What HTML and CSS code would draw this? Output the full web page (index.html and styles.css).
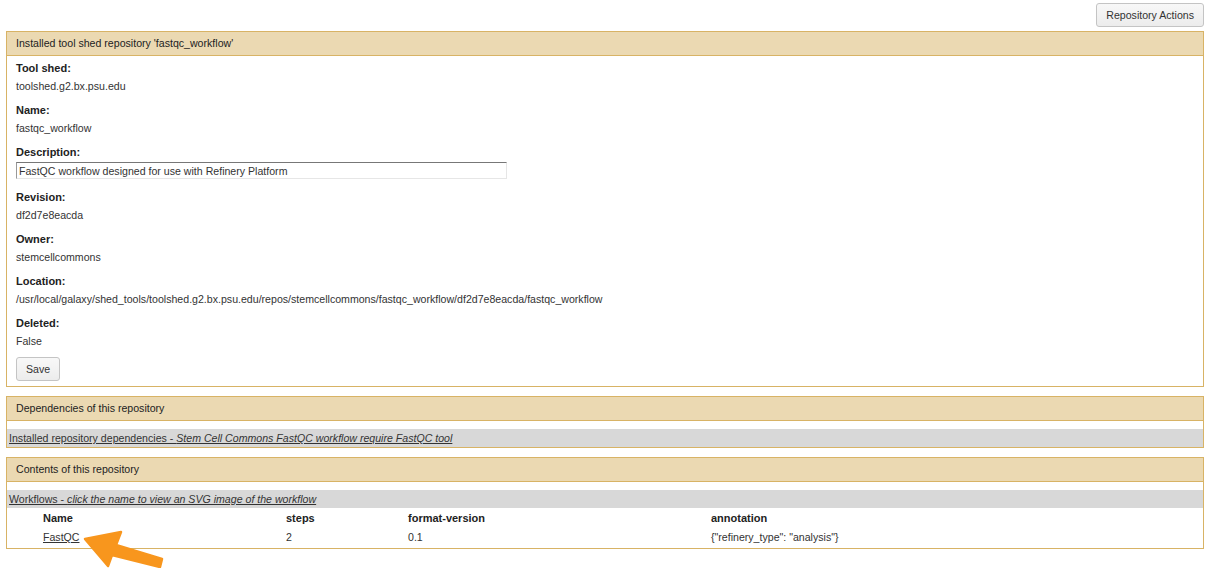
FILE: index.html
```html
<!DOCTYPE html>
<html lang="en">
<head>
  <meta charset="UTF-8">
  <title>Installed tool shed repository</title>
  <link rel="stylesheet" href="styles.css">
</head>
<body>

<div class="topbar">
  <button class="btn">Repository Actions</button>
</div>

<div class="panel">
  <div class="panel-title">Installed tool shed repository 'fastqc_workflow'</div>
  <div class="panel-body">
    <div class="form-row">
      <label>Tool shed:</label>
      <div>toolshed.g2.bx.psu.edu</div>
    </div>
    <div class="form-row">
      <label>Name:</label>
      <div>fastqc_workflow</div>
    </div>
    <div class="form-row input-row">
      <label>Description:</label>
      <input type="text" class="text-input" value="FastQC workflow designed for use with Refinery Platform">
    </div>
    <div class="form-row">
      <label>Revision:</label>
      <div>df2d7e8eacda</div>
    </div>
    <div class="form-row">
      <label>Owner:</label>
      <div>stemcellcommons</div>
    </div>
    <div class="form-row">
      <label>Location:</label>
      <div>/usr/local/galaxy/shed_tools/toolshed.g2.bx.psu.edu/repos/stemcellcommons/fastqc_workflow/df2d7e8eacda/fastqc_workflow</div>
    </div>
    <div class="form-row">
      <label>Deleted:</label>
      <div>False</div>
    </div>
    <div class="form-row save-row">
      <button class="btn btn-save">Save</button>
    </div>
  </div>
</div>

<div class="panel">
  <div class="panel-title">Dependencies of this repository</div>
  <div class="panel-body list-body">
    <div class="folder-row">
      <a href="#">Installed repository dependencies - <i>Stem Cell Commons FastQC workflow require FastQC tool</i></a>
    </div>
  </div>
</div>

<div class="panel">
  <div class="panel-title">Contents of this repository</div>
  <div class="panel-body list-body">
    <div class="folder-row">
      <a href="#">Workflows - <i>click the name to view an SVG image of the workflow</i></a>
    </div>
    <table class="grid">
      <tr>
        <th class="col-name">Name</th>
        <th class="col-steps">steps</th>
        <th class="col-version">format-version</th>
        <th>annotation</th>
      </tr>
      <tr>
        <td><a href="#">FastQC</a></td>
        <td>2</td>
        <td>0.1</td>
        <td>{"refinery_type": "analysis"}</td>
      </tr>
    </table>
  </div>
</div>

<!-- callout arrow -->
<svg class="callout" width="90" height="45" viewBox="80 528 90 45">
  <polygon points="85,539 121,532 116,545 162,559 160,567 112,555 108,566"
           fill="#f8961d" stroke="#f8961d" stroke-width="2.5" stroke-linejoin="round"/>
</svg>

</body>
</html>
```

FILE: styles.css
```css
body {
  font-family: "Liberation Sans", Arial, sans-serif;
  font-size: 10.6px;
  line-height: 13px;
  color: #333;
  margin: 0;
  padding: 0;
  background: white;
}

.topbar {
  display: flex;
  justify-content: flex-end;
  padding: 3px 6px 4px;
}

.btn {
  font-family: "Liberation Sans", Arial, sans-serif;
  font-size: 10.6px;
  color: #333;
  height: 24px;
  padding: 0 9px;
  background: linear-gradient(#f8f8f8, #ececec);
  border: 1px solid #c4c4c4;
  border-radius: 3px;
}

.panel {
  border: 1px solid #d8b365;
  margin: 0 6px 9px;
  background: white;
}

.panel-title {
  background: #ebd9b2;
  border-bottom: 1px solid #d8b365;
  padding: 5px 9px;
  color: #222;
}

.panel-body {
  padding-top: 1px;
}

.form-row {
  padding: 5px 9px 6px;
}

.form-row label {
  display: block;
  font-size: 11px;
  font-weight: bold;
  color: #222;
  margin-bottom: 5px;
}

.input-row {
  padding-bottom: 7px;
}

.input-row label {
  margin-bottom: 3px;
}

.text-input {
  display: block;
  box-sizing: border-box;
  width: 491px;
  height: 17px;
  margin: 0;
  padding: 0 2px;
  font-family: "Liberation Sans", Arial, sans-serif;
  font-size: 10.6px;
  color: #333;
  border: 1px solid #e6e6e6;
  border-top-color: #777;
  border-left-color: #999;
  background: white;
}

.save-row {
  padding: 3px 9px 5px;
}

.btn-save {
  padding: 0 9px;
}

.list-body {
  padding-top: 8px;
}

.folder-row {
  background: #d8d8d8;
  height: 18px;
  line-height: 18px;
  padding-left: 2px;
}

a {
  color: #333;
  text-decoration: underline;
}

.grid {
  border-collapse: collapse;
  margin: 1px 0 1px 36px;
}

.grid th,
.grid td {
  text-align: left;
  padding: 0;
  height: 19px;
  vertical-align: middle;
}

.grid th {
  font-size: 11px;
  font-weight: bold;
  color: #222;
}

.col-name { width: 243px; }
.col-steps { width: 122px; }
.col-version { width: 303px; }

.callout {
  position: absolute;
  left: 80px;
  top: 528px;
}
```
